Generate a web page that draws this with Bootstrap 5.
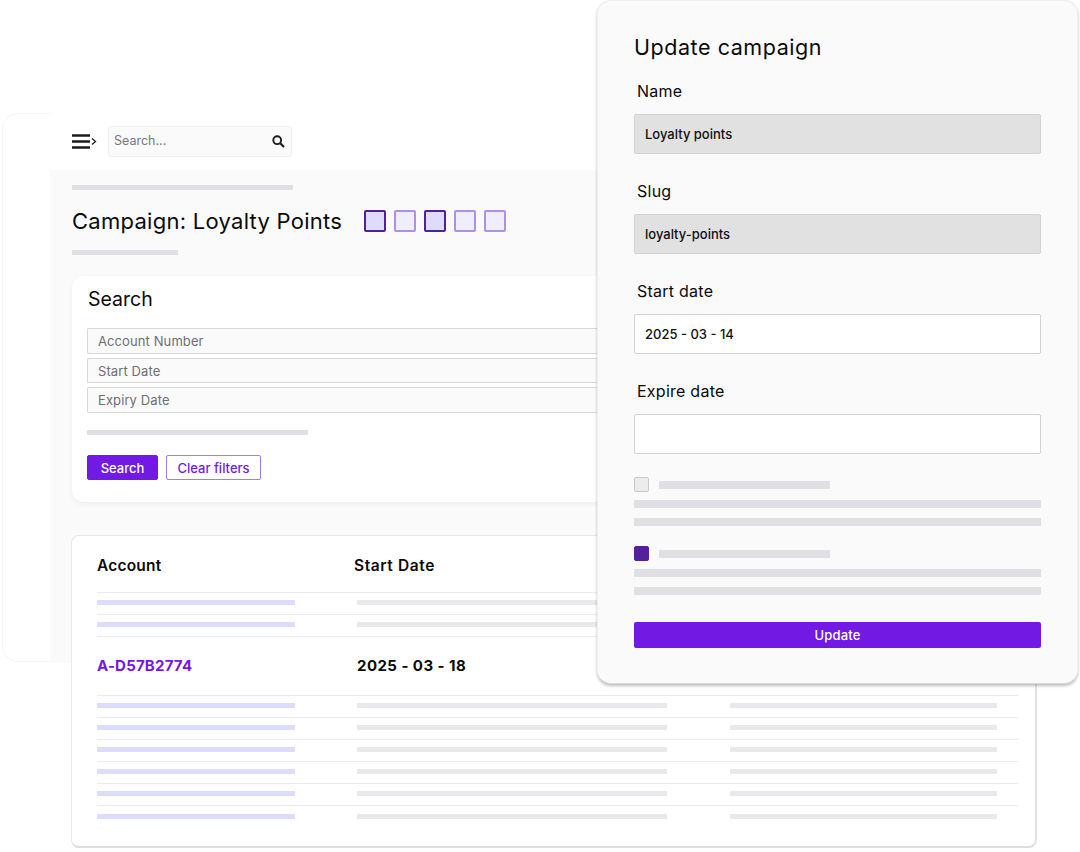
<!doctype html>
<html lang="en">
<head>
<meta charset="utf-8">
<title>Update campaign</title>
<link href="https://cdn.jsdelivr.net/npm/bootstrap@5.3.0/dist/css/bootstrap.min.css" rel="stylesheet">
<style>
html,body{margin:0;height:852px;overflow:hidden;background:#fff}
body{font-family:Inter,"Liberation Sans",sans-serif;color:#0a0a0a}
.stage{position:relative;width:1080px;height:852px;overflow:hidden}
.sk{display:block;background:#e0dfe4}

/* app window */
.appwin{position:absolute;left:0;top:110px;width:640px;height:553px;background:#fff}
.appedge{position:absolute;left:2px;top:3px;width:48px;height:549px;border:1px solid #f5f5f6;border-right:0;border-radius:16px 0 0 16px}
.apphead{position:relative;height:60px;padding:2px 0 0 72px;gap:12px}
.burger{width:25px;margin-right:-1px}
.searchbox{width:184px;height:31px;background:#fafafa;border:1px solid #eeeeee;border-radius:3px;padding:1px 6px 0 5px;font-size:12.5px;color:#77777c}
.appbody{position:relative;background:#fafafa;margin-left:50px;height:493px;padding:15px 0 0 22px}
.crumb{width:221px;height:5px}
.titlerow{margin-top:16px;height:30px}
.pagetitle{font-size:22px;font-weight:400;margin:0;line-height:30px;letter-spacing:.27px;width:292px}
.sq{width:22px;height:22px;border-radius:2px;border:2px solid #b08fe8;background:#eeeeff;margin-right:8px}
.sq-dark{border-color:#52209f;background:#dddcfd}
.subbar{width:106px;height:5px;margin-top:14px}
.searchcard{margin-top:21px;width:568px;height:226px;background:#fff;border-radius:12px;padding:11px 15px;box-shadow:0 2px 5px rgba(0,0,0,.06)}
.cardtitle{font-size:19.5px;font-weight:400;line-height:24px;margin:0 0 17px;padding-left:1px}
.fieldstack{display:flex;flex-direction:column;gap:4px}
.field{height:25.5px;background:#fafafa;border:1px solid #d8d8d8;border-radius:2px 0 0 2px;border-right:0;font-size:13px;line-height:24.5px;padding-left:10px;color:#6e6e73;letter-spacing:.1px}
.hintbar{width:221px;height:5px;margin-top:17px}
.btnrow{margin-top:20px;gap:8px}
.btn-go,.btn-clear{font-size:13px;line-height:16px;padding:4px 0;border-radius:2px;font-weight:500;height:25px}
.btn-go{background:#7219e3;border:1px solid #7219e3;color:#fff;width:71px}
.btn-clear{background:#fff;border:1px solid #a679ee;color:#7219e3;width:95px}

/* table window */
.tablewin{position:absolute;left:71px;top:535px;width:966px;height:313px;background:#fff;border:1px solid #e8e8ee;border-bottom:2px solid #dcdce4;border-right:2px solid #e2e2e6;border-radius:8px;padding:0 17px 0 25px}
.trow{display:grid;grid-template-columns:260px 373px 1fr;border-bottom:1px solid #ebebee;height:22px;padding-bottom:2px;align-items:center;width:921px}
.thead{height:57px;font-weight:600;font-size:15.5px;letter-spacing:.2px;padding:4px 0 0}
.tfeat{height:59px;padding:0;font-weight:700;font-size:15px;letter-spacing:.45px}
.tfeat a{color:#7219e3;text-decoration:none;letter-spacing:.2px}
.tlast{border-bottom:0}
.b1,.b2,.b3{height:5px;display:block}
.b1{width:198px;background:#dcdcfd}
.b2{width:310px;background:#e9e9ec}
.b3{width:267px;background:#e9e9ec}
.r2{margin-left:-3px;letter-spacing:.6px}

/* modal */
.modalwin{position:absolute;left:597px;top:0;width:481px;height:684px;background:#fafafa;border:1px solid #eeeef0;border-bottom-color:#d8d8dc;border-radius:14px;box-shadow:0 2px 3px rgba(0,0,0,.25);padding:32px 36px 0 36px}
.mtitle{font-size:21.5px;font-weight:400;line-height:28px;margin:0 0 19px;letter-spacing:.55px}
.mlabel{font-size:16px;line-height:22px;padding-left:3px;margin-bottom:12px;display:block;letter-spacing:.25px}
.mgroup{margin-bottom:26px}
.minput{height:40px;border:1px solid #d2d2d2;border-radius:2px;background:#fff;font-size:13px;padding:1px 10px 0;display:flex;align-items:center;color:#111;font-weight:500}
.minput.off{background:#e1e1e1}
.checks{margin-top:-3px}
.cb{width:15px;height:15px;border-radius:2px;border:1px solid #c9c9c9;background:#ececee;flex:none}
.cb.on{background:#54209c;border-color:#54209c}
.cbtitle{width:171px;height:8px;margin-left:10px}
.cbline{height:8px;margin-top:10px}
.cbtop{height:15px;margin-bottom:-2px}
.mblock{margin-bottom:20px}
.btn-up{height:26px;width:100%;background:#7219e3;border:0;border-radius:2px;color:#fff;font-size:13px;line-height:26px;padding:0;font-weight:500;margin-top:7px;letter-spacing:.2px}
</style>
</head>
<body>
<div class="stage">

  <div class="appwin">
    <div class="appedge"></div>
    <div class="apphead d-flex align-items-center">
      <svg class="burger" width="25" height="17" viewBox="0 0 25 17" aria-hidden="true">
        <path d="M0 2.5h18M0 8.500h18M0 14.500h18" stroke="#1c1c1c" stroke-width="2.6" fill="none"/>
        <path d="M20 5.500 23.500 8.500l-3.500 3" stroke="#1c1c1c" stroke-width="1.300" fill="none"/>
      </svg>
      <div class="searchbox d-flex align-items-center justify-content-between">
        <span>Search...</span>
        <svg width="13" height="13" viewBox="0 0 13 13" aria-hidden="true">
          <circle cx="5.2" cy="5.2" r="3.9" stroke="#1c1c1c" stroke-width="1.9" fill="none"/>
          <path d="m8.2 8.2 3.8 3.8" stroke="#1c1c1c" stroke-width="2.2" fill="none"/>
        </svg>
      </div>
    </div>
    <div class="appbody">
      <span class="sk crumb"></span>
      <div class="titlerow d-flex align-items-center">
        <h1 class="pagetitle">Campaign: Loyalty Points</h1>
        <span class="sq sq-dark"></span><span class="sq"></span><span class="sq sq-dark"></span><span class="sq"></span><span class="sq"></span>
      </div>
      <span class="sk subbar"></span>
      <div class="searchcard">
        <h2 class="cardtitle">Search</h2>
        <div class="fieldstack">
          <div class="field">Account Number</div>
          <div class="field">Start Date</div>
          <div class="field">Expiry Date</div>
        </div>
        <span class="sk hintbar"></span>
        <div class="btnrow d-flex">
          <button type="button" class="btn btn-go">Search</button>
          <button type="button" class="btn btn-clear">Clear filters</button>
        </div>
      </div>
    </div>
  </div>

  <div class="tablewin">
    <div class="trow thead"><span>Account</span><span class="r2">Start Date</span><span></span></div>
    <div class="trow"><i class="b1"></i><i class="b2"></i><i class="b3"></i></div>
    <div class="trow"><i class="b1"></i><i class="b2"></i><i class="b3"></i></div>
    <div class="trow tfeat"><a href="#">A-D57B2774</a><span>2025 - 03 - 18</span><span></span></div>
    <div class="trow"><i class="b1"></i><i class="b2"></i><i class="b3"></i></div>
    <div class="trow"><i class="b1"></i><i class="b2"></i><i class="b3"></i></div>
    <div class="trow"><i class="b1"></i><i class="b2"></i><i class="b3"></i></div>
    <div class="trow"><i class="b1"></i><i class="b2"></i><i class="b3"></i></div>
    <div class="trow"><i class="b1"></i><i class="b2"></i><i class="b3"></i></div>
    <div class="trow tlast"><i class="b1"></i><i class="b2"></i><i class="b3"></i></div>
  </div>

  <div class="modalwin">
    <h2 class="mtitle">Update campaign</h2>
    <div class="mgroup"><label class="mlabel">Name</label><div class="minput off">Loyalty points</div></div>
    <div class="mgroup"><label class="mlabel">Slug</label><div class="minput off">loyalty-points</div></div>
    <div class="mgroup"><label class="mlabel">Start date</label><div class="minput">2025 - 03 - 14</div></div>
    <div class="mgroup"><label class="mlabel">Expire date</label><div class="minput"></div></div>
    <div class="checks">
      <div class="mblock">
        <div class="cbtop d-flex align-items-center"><span class="cb"></span><span class="sk cbtitle"></span></div>
        <span class="sk cbline"></span><span class="sk cbline"></span>
      </div>
      <div class="mblock">
        <div class="cbtop d-flex align-items-center"><span class="cb on"></span><span class="sk cbtitle"></span></div>
        <span class="sk cbline"></span><span class="sk cbline"></span>
      </div>
    </div>
    <button type="button" class="btn btn-up">Update</button>
  </div>

</div>
<script src="https://cdn.jsdelivr.net/npm/bootstrap@5.3.0/dist/js/bootstrap.bundle.min.js"></script>
</body>
</html>
